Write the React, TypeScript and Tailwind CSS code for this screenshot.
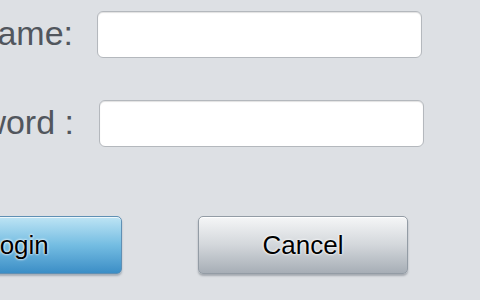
export default function App() {
  return (
    <div className="w-[480px] h-[300px] overflow-hidden bg-[#dde0e4] font-['Liberation_Sans',Arial,sans-serif]">
      <div className="flex flex-col pt-[11px]">
        {/* Username row */}
        <div className="flex items-center">
          <div className="w-[73px] flex justify-end shrink-0">
            <span className="whitespace-nowrap text-[34px] leading-none text-[#51565d] mb-1 shrink-0">
              User Name:
            </span>
          </div>
          <input
            type="text"
            className="ml-[24px] w-[325px] h-[47px] bg-white border border-[#b4b8bd] rounded-[6px] shadow-[inset_0_1px_1px_rgba(0,0,0,0.12)] outline-none"
          />
        </div>

        {/* Password row */}
        <div className="flex items-center mt-[42px]">
          <div className="w-[74px] flex justify-end shrink-0">
            <span className="whitespace-nowrap text-[34px] leading-none text-[#51565d] mb-1 shrink-0">
              Password :
            </span>
          </div>
          <input
            type="password"
            className="ml-[25px] w-[325px] h-[47px] bg-white border border-[#b4b8bd] rounded-[6px] shadow-[inset_0_1px_1px_rgba(0,0,0,0.12)] outline-none"
          />
        </div>

        {/* Buttons */}
        <div className="flex mt-[69px] ml-[-88px] gap-[76px]">
          <button className="w-[210px] h-[58px] shrink-0 rounded-[5px] border border-[#5f90b4] bg-gradient-to-b from-[#bde4f4] via-[#74bde2] to-[#3b8ec6] shadow-[0_2px_2px_rgba(60,80,100,0.35),inset_0_1px_0_rgba(255,255,255,0.7)] text-[26px] text-black [text-shadow:0_0_3px_#fff,0_0_2px_#fff]">
            Login
          </button>
          <button className="w-[210px] h-[58px] shrink-0 rounded-[5px] border border-[#939ca5] bg-gradient-to-b from-[#f5f6f7] via-[#d3d7db] to-[#a7aeb6] shadow-[0_2px_2px_rgba(60,70,80,0.35),inset_0_1px_0_rgba(255,255,255,0.9)] text-[26px] text-black [text-shadow:0_0_3px_#fff,0_0_2px_#fff]">
            Cancel
          </button>
        </div>
      </div>
    </div>
  )
}
